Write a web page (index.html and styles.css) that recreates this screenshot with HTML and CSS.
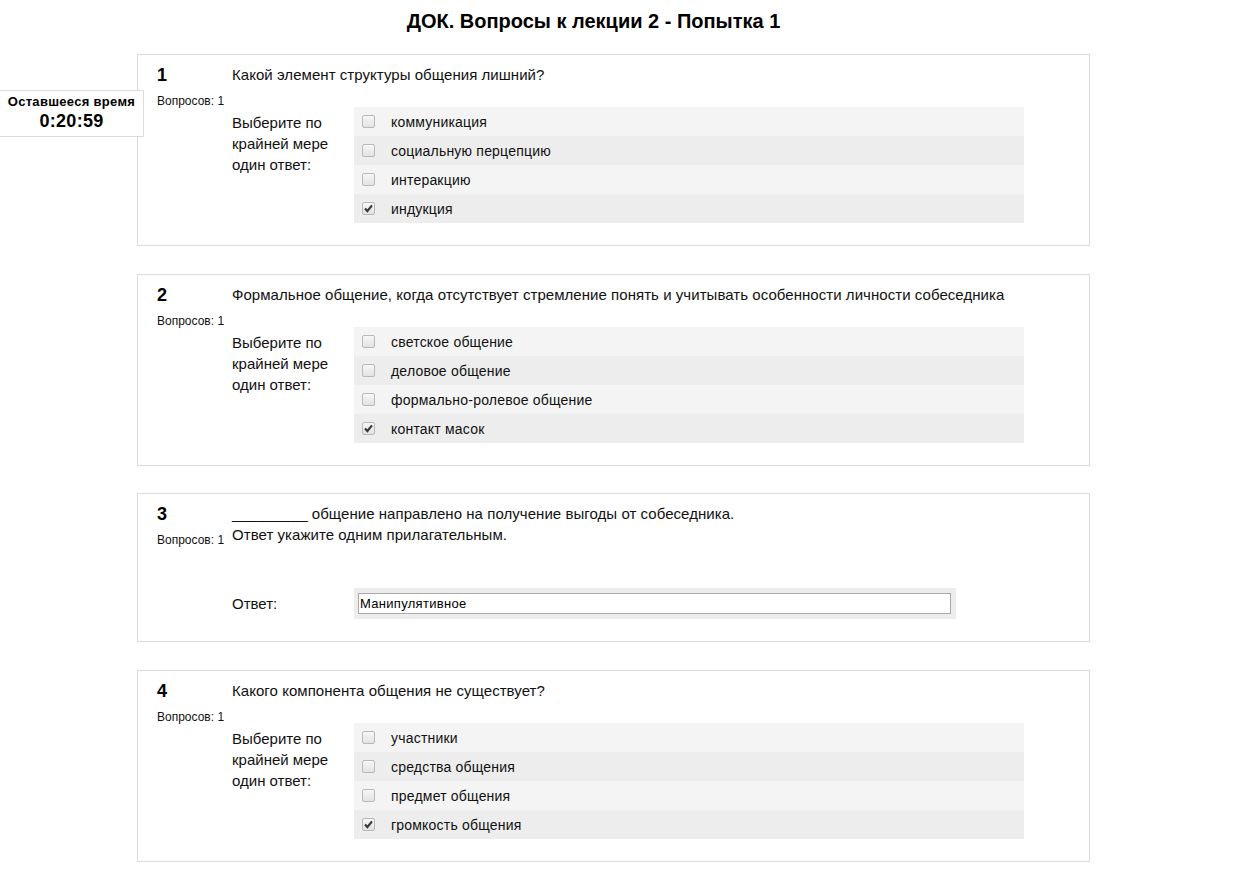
FILE: index.html
```html
<!DOCTYPE html>
<html lang="ru">
<head>
<meta charset="utf-8">
<title>ДОК. Вопросы к лекции 2 - Попытка 1</title>
<link rel="stylesheet" href="styles.css">
</head>
<body>
<div class="timer">
  <div class="timer-label">Оставшееся время</div>
  <div class="timer-value">0:20:59</div>
</div>
<header class="header">
  <h1 class="title">ДОК. Вопросы к лекции 2 - Попытка 1</h1>
</header>
<main class="page">
  <section class="que">
    <div class="info">
      <div class="no">1</div>
      <div class="grade">Вопросов: 1</div>
    </div>
    <div class="content">
      <div class="qtext">Какой элемент структуры общения лишний?</div>
      <div class="ablock">
        <div class="prompt">Выберите по крайней мере один ответ:</div>
        <div class="answer">
          <div class="opt r0"><span class="cb"></span><span>коммуникация</span></div>
          <div class="opt r1"><span class="cb"></span><span>социальную перцепцию</span></div>
          <div class="opt r0"><span class="cb"></span><span>интеракцию</span></div>
          <div class="opt r1"><span class="cb checked"><svg viewBox="0 0 13 13" width="13" height="13"><path d="M3 6.4 L5.4 9 L10 3.4" fill="none" stroke="#3a3a3a" stroke-width="2.2"/></svg></span><span>индукция</span></div>
        </div>
      </div>
    </div>
  </section>

  <section class="que">
    <div class="info">
      <div class="no">2</div>
      <div class="grade">Вопросов: 1</div>
    </div>
    <div class="content">
      <div class="qtext">Формальное общение, когда отсутствует стремление понять и учитывать особенности личности собеседника</div>
      <div class="ablock">
        <div class="prompt">Выберите по крайней мере один ответ:</div>
        <div class="answer">
          <div class="opt r0"><span class="cb"></span><span>светское общение</span></div>
          <div class="opt r1"><span class="cb"></span><span>деловое общение</span></div>
          <div class="opt r0"><span class="cb"></span><span>формально-ролевое общение</span></div>
          <div class="opt r1"><span class="cb checked"><svg viewBox="0 0 13 13" width="13" height="13"><path d="M3 6.4 L5.4 9 L10 3.4" fill="none" stroke="#3a3a3a" stroke-width="2.2"/></svg></span><span>контакт масок</span></div>
        </div>
      </div>
    </div>
  </section>

  <section class="que">
    <div class="info">
      <div class="no">3</div>
      <div class="grade">Вопросов: 1</div>
    </div>
    <div class="content">
      <div class="qtext">_________ общение направлено на получение выгоды от собеседника.<br>Ответ укажите одним прилагательным.<br>&nbsp;</div>
      <div class="ablock">
        <div class="prompt">Ответ:</div>
        <div class="textanswer">
          <div class="field">Манипулятивное</div>
        </div>
      </div>
    </div>
  </section>

  <section class="que">
    <div class="info">
      <div class="no">4</div>
      <div class="grade">Вопросов: 1</div>
    </div>
    <div class="content">
      <div class="qtext">Какого компонента общения не существует?</div>
      <div class="ablock">
        <div class="prompt">Выберите по крайней мере один ответ:</div>
        <div class="answer">
          <div class="opt r0"><span class="cb"></span><span>участники</span></div>
          <div class="opt r1"><span class="cb"></span><span>средства общения</span></div>
          <div class="opt r0"><span class="cb"></span><span>предмет общения</span></div>
          <div class="opt r1"><span class="cb checked"><svg viewBox="0 0 13 13" width="13" height="13"><path d="M3 6.4 L5.4 9 L10 3.4" fill="none" stroke="#3a3a3a" stroke-width="2.2"/></svg></span><span>громкость общения</span></div>
        </div>
      </div>
    </div>
  </section>
</main>
</body>
</html>
```
FILE: styles.css
```css
* { box-sizing: border-box; }

html, body {
  margin: 0;
  padding: 0;
  background: #fff;
}

body {
  font-family: "Liberation Sans", Arial, sans-serif;
  color: #111;
  font-size: 15px;
}

.header {
  padding-top: 10px;
  padding-right: 58px;
  text-align: center;
}

.title {
  margin: 0;
  font-size: 20px;
  line-height: 23px;
  font-weight: bold;
  color: #000;
}

.page {
  width: 953px;
  margin: 21px 0 0 137px;
  padding-bottom: 20px;
}

.que {
  display: flex;
  border: 1px solid #dcdcdc;
  padding: 9px 0 22px 19px;
  margin-bottom: 28px;
  background: #fff;
}

.que:nth-child(2) {
  margin-bottom: 27px;
}

.info {
  width: 75px;
  flex: none;
}

.no {
  font-size: 18px;
  font-weight: bold;
  line-height: 21px;
  color: #000;
  padding-top: 1px;
}

.grade {
  margin-top: 9px;
  font-size: 12px;
  line-height: 13px;
  color: #111;
}

.content {
  flex: 1;
}

.qtext {
  font-size: 15px;
  letter-spacing: 0.05px;
  line-height: 21px;
  margin-bottom: 22px;
}

.ablock {
  display: flex;
  align-items: flex-start;
}

.prompt {
  width: 122px;
  flex: none;
  padding-top: 5px;
  font-size: 15px;
  line-height: 21px;
}

.answer {
  width: 670px;
}

.opt {
  display: flex;
  align-items: center;
  height: 29px;
  padding-left: 8px;
  font-size: 14px;
  letter-spacing: 0.2px;
}

.r0 { background: #f4f4f4; }
.r1 { background: #ededed; }

.cb {
  width: 13px;
  height: 13px;
  flex: none;
  margin-right: 16px;
  border: 1px solid #b9b9b9;
  border-radius: 2px;
  background: linear-gradient(#f7f7f7, #e2e2e2);
  position: relative;
}

.cb svg {
  position: absolute;
  left: -1px;
  top: -1px;
}

.textanswer {
  width: 602px;
  background: #ededed;
  padding: 5px 5px 5px 4px;
}

.field {
  height: 21px;
  border: 1px solid #a9a9a9;
  background: #fff;
  font-size: 13px;
  letter-spacing: 0.3px;
  line-height: 19px;
  padding-left: 1px;
  color: #000;
}

.timer {
  position: absolute;
  left: -1px;
  top: 90px;
  width: 145px;
  height: 47px;
  border: 1px solid #dcdcdc;
  background: #fff;
  text-align: center;
  color: #000;
  font-weight: bold;
  z-index: 2;
}

.timer-label {
  font-size: 13px;
  letter-spacing: 0.3px;
  line-height: 14px;
  margin-top: 4px;
}

.timer-value {
  font-size: 18px;
  letter-spacing: 0.3px;
  line-height: 22px;
  margin-top: 1px;
}
```
